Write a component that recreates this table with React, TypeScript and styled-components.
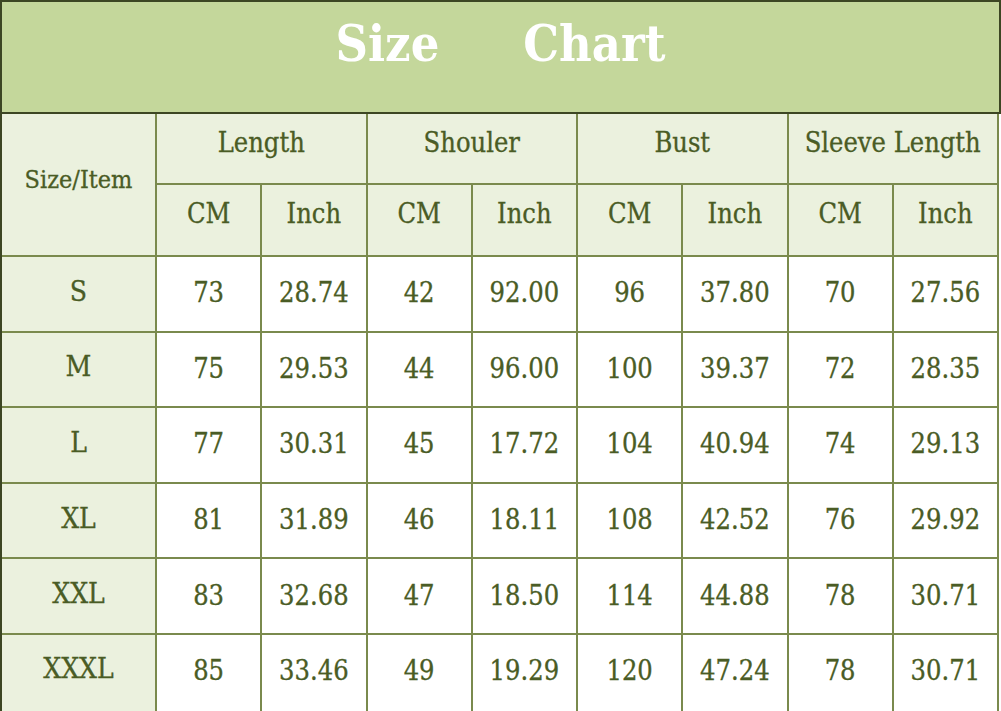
import React from "react";
import styled, { createGlobalStyle } from "styled-components";

const Global = createGlobalStyle`
  html, body { margin: 0; padding: 0; background: #ffffff; }
  * { box-sizing: border-box; }
`;

const FONT = `"DejaVu Serif Condensed", "DejaVu Serif", "Liberation Serif", serif`;
const LINE = "#7a8a4d";
const DARK = "#3c4623";
const INK = "#4a5c25";

const Sheet = styled.div`
  width: 1001px;
  font-family: ${FONT};
  font-stretch: condensed;
  color: ${INK};
`;

const TitleBand = styled.header`
  height: 114px;
  background: #c4d79b;
  border: 2px solid ${DARK};
  display: flex;
  justify-content: center;
  align-items: flex-start;
  gap: 84px;
  padding-top: 17px;
`;

const TitleWord = styled.span`
  font-size: 50px;
  line-height: 1;
  font-weight: 700;
  color: #ffffff;
`;

const Grid = styled.div`
  width: 999px;
  display: grid;
  grid-template-columns: 155px repeat(8, 1fr);
  grid-template-rows: 71px 72px repeat(5, 75.6px) 78px;
  border-left: 2px solid ${DARK};
`;

const Cell = styled.div<{ $tone?: "head" | "plain"; $lift?: number; $size?: number }>`
  display: flex;
  align-items: center;
  justify-content: center;
  border-right: 2px solid ${LINE};
  border-bottom: 2px solid ${LINE};
  background: ${(p) => (p.$tone === "head" ? "#ebf1de" : "#ffffff")};
  padding-bottom: ${(p) => p.$lift ?? 0}px;
  font-size: ${(p) => p.$size ?? 27}px;
  line-height: 1;
  white-space: nowrap;
  -webkit-text-stroke: 0.3px ${INK};
`;

const CornerCell = styled(Cell)`
  grid-row: span 2;
`;

const GroupCell = styled(Cell)`
  grid-column: span 2;
`;

const groups = ["Length", "Shouler", "Bust", "Sleeve Length"];

const rows: [string, string[]][] = [
  ["S", ["73", "28.74", "42", "92.00", "96", "37.80", "70", "27.56"]],
  ["M", ["75", "29.53", "44", "96.00", "100", "39.37", "72", "28.35"]],
  ["L", ["77", "30.31", "45", "17.72", "104", "40.94", "74", "29.13"]],
  ["XL", ["81", "31.89", "46", "18.11", "108", "42.52", "76", "29.92"]],
  ["XXL", ["83", "32.68", "47", "18.50", "114", "44.88", "78", "30.71"]],
  ["XXXL", ["85", "33.46", "49", "19.29", "120", "47.24", "78", "30.71"]],
];

export default function App() {
  return (
    <>
      <Global />
      <Sheet>
        <TitleBand>
          <TitleWord>Size</TitleWord>
          <TitleWord>Chart</TitleWord>
        </TitleBand>
        <Grid>
          <CornerCell $tone="head" $lift={10} $size={25}>
            Size/Item
          </CornerCell>
          {groups.map((g) => (
            <GroupCell key={g} $tone="head" $lift={12}>
              {g}
            </GroupCell>
          ))}
          {groups.flatMap((g) => [
            <Cell key={g + "cm"} $tone="head" $lift={14}>
              CM
            </Cell>,
            <Cell key={g + "in"} $tone="head" $lift={14}>
              Inch
            </Cell>,
          ])}
          {rows.map(([size, vals], r) => (
            <React.Fragment key={size}>
              <Cell $tone="head" $lift={r === rows.length - 1 ? 7 : 4} $size={28}>
                {size}
              </Cell>
              {vals.map((v, i) => (
                <Cell key={i} $lift={r === rows.length - 1 ? 5 : 2}>
                  {v}
                </Cell>
              ))}
            </React.Fragment>
          ))}
        </Grid>
      </Sheet>
    </>
  );
}
